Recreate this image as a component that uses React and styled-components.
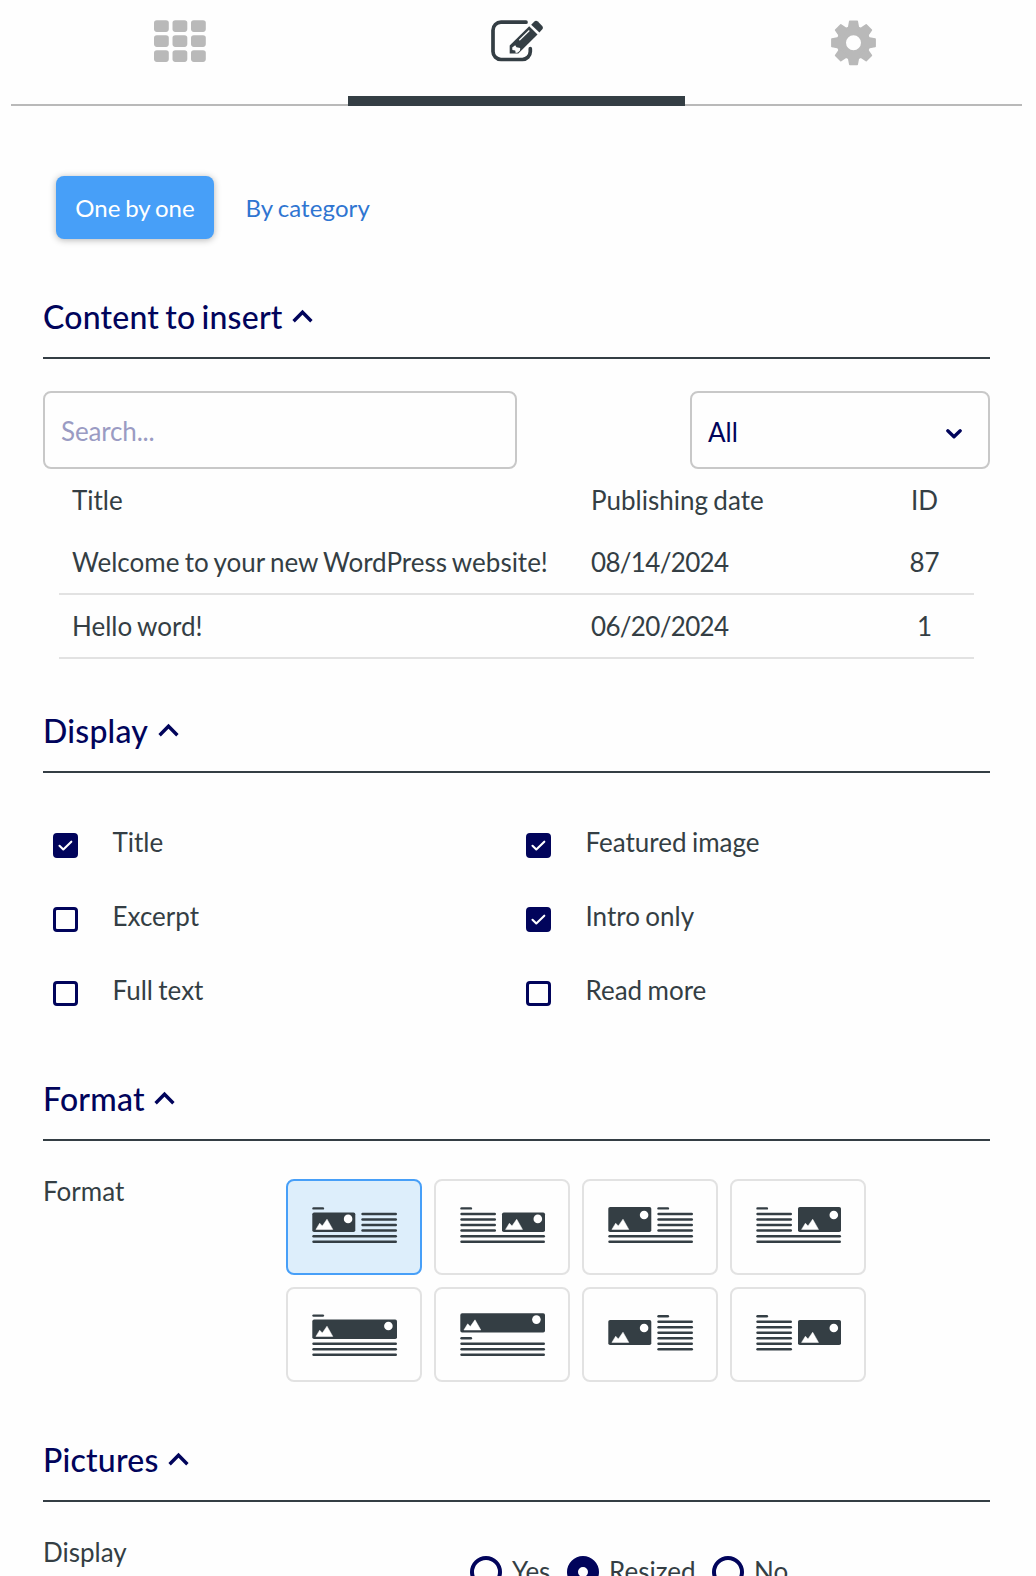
import React, { useState } from 'react'
import styled, { createGlobalStyle, css } from 'styled-components';

const GlobalStyle = createGlobalStyle`
  :root {
    --ink: #343e44; --navy: #01045b; --blue: #479ff8; --link: #2f75d1;
    --gray: #b9b9b9; --line: #e2e2e2; --field: #c8c8c8; --bg: #fefefe;
  }
  * { box-sizing: border-box; }
  html, body { margin: 0; height: 1576px; overflow: hidden; background: var(--bg); }
  body, button, input { font-family: Lato, "Liberation Sans", sans-serif; word-spacing: -1.3px; }
  body { font-size: 26px; line-height: 32px; color: var(--ink); }
  button { margin: 0; padding: 0; border: 0; background: none; cursor: pointer; }
`;
const Page = styled.div`
  height: 1576px; overflow: hidden;
`;
const TabBar = styled.nav`
  display: flex; height: 106px; padding: 0 14px 0 11px;
`;
const Tab = styled.button`
  flex: 1; display: flex; justify-content: center; align-items: flex-start;
  padding-top: 20px; border-bottom: 2px solid var(--gray); color: var(--gray);
  ${props =>
    props.$active &&
    css`
      border-bottom: 10px solid var(--ink);
      color: var(--ink);
    `}
`;
const Body = styled.main`
  padding: 70px 46px 0 43px;
`;
const Pills = styled.div`
  display: flex; gap: 12.5px; padding-left: 13px;
`;
const Pill = styled.button`
  height: 63px; padding: 0 19px; border-radius: 8px;
  font-size: 24px; line-height: 30px; white-space: nowrap; color: var(--link);
  ${props =>
    props.$active
      ? css`
          width: 158px;
          background: var(--blue);
          color: #fff;
          box-shadow: 0 1px 7px rgba(0,0,0,.3);
        `
      : css`
          letter-spacing: .1px;
        `}
`;
const Heading = styled.h2`
  display: flex; align-items: center; gap: 9.5px;
  margin: ${props => props.$top}px 0 0; padding-bottom: 20px; border-bottom: 2px solid var(--ink);
  font-size: 32px; font-weight: 500; line-height: 40px; color: var(--navy); cursor: pointer;
  letter-spacing: .22px; word-spacing: -2.2px;
  svg { margin-bottom: 2px; }
`;
const Filters = styled.div`
  display: flex; justify-content: space-between; margin-top: 32px;
`;
const SearchInput = styled.input`
  width: 474px; height: 78px; padding: 1px 16px 0; border: 2px solid var(--field); border-radius: 8px;
  background: transparent; color: var(--navy); font-size: 26px; letter-spacing: -.15px; outline: none;
  &::placeholder { color: #9a9bc3; opacity: 1; }
`;
const SelectBox = styled.button`
  display: flex; align-items: center; justify-content: space-between;
  width: 300px; height: 78px; padding: 3px 26px 0 16px; border: 2px solid var(--field); border-radius: 8px;
  font-size: 26px; color: var(--navy);
  svg { margin-top: 4px; }
`;
const Table = styled.div`
  margin: 0 16px;
`;
const Row = styled.div`
  display: grid; grid-template-columns: 519px 283px 100px;
  padding: 15px 0 15px 13px; border-bottom: 2px solid var(--line);
  > span:last-child { text-align: center; width: 101px; }
`;
const HeadRow = styled(Row)`
  border-bottom: 0;
`;
const DateText = styled.span`
  letter-spacing: -.68px;
`;
const Checks = styled.div`
  display: grid; grid-template-columns: 473px 1fr; row-gap: 42px; margin-top: 53px;
`;
const CheckItem = styled.label`
  display: flex; gap: 34.5px; padding-left: 10px; cursor: pointer;
`;
const CheckBox = styled.span`
  display: flex; align-items: center; justify-content: center;
  width: 25px; height: 25px; margin-top: 7px; border: 3px solid var(--navy); border-radius: 4px;
  background: ${props => props.$checked ? 'var(--navy)' : 'transparent'};
`;
const Field = styled.div`
  display: flex; padding-top: 34px;
`;
const FieldLabel = styled.div`
  width: ${props => props.$width}px;
`;
const Tiles = styled.div`
  display: grid; grid-template-columns: repeat(4, 136px); grid-template-rows: 96px 95px; gap: 12px;
  margin-top: 4px;
`;
const Tile = styled.button`
  border: 2px solid var(--line); border-radius: 8px; overflow: hidden;
  ${props =>
    props.$active &&
    css`
      border-color: var(--blue);
      background: #ddeefb;
    `}
  svg { display: block; }
`;
const Radios = styled.div`
  display: flex; margin-top: 20px;
`;
const RadioItem = styled.label`
  display: flex; align-items: flex-start; gap: 10px; width: ${props => props.$width}px; height: 33px; cursor: pointer;
  line-height: 30px;
`;
const RadioDot = styled.span`
  flex: none; width: 32px; height: 32px; border-radius: 50%;
  border: ${props => props.$checked ? 11 : 4}px solid var(--navy);
`;

const GridIcon = () => (
  <svg width="53" height="42" viewBox="0 0 53 42" fill="currentColor">
    {[0, 15, 30].map(y => [1, 19.5, 38].map(x => (
      <rect key={`${x}-${y}`} x={x} y={y + 0.3} width="14.8" height="11.6" rx="2.8" />
    )))}
  </svg>
)

const EditIcon = () => (
  <svg width="54" height="42" viewBox="-1 0 54 42" fill="currentColor">
    <path d="M35 2.2H10a8 8 0 0 0-8 8v21.3a8 8 0 0 0 8 8h21.3a8 8 0 0 0 8-8v-2.8" fill="none" stroke="currentColor" strokeWidth="3.7" strokeLinecap="round" />
    <path d="M18.7 33.6v-8.2L38.2 6.3l8.3 8.2-19.2 19.1z" />
    <path d="M40.2 4.8l2.9-3.1q1.8-1.8 3.8-.2l4.1 4.2q1.8 1.9.1 3.8l-2.7 3z" />
    <path d="M28.3 20.3L38.3 10.5" stroke="#fefefe" strokeWidth="1.3" />
    <path d="M21.2 27.4l3-2.2 1.3 2.1 3.7.8-.2 2.5-2.1 2-2.2.3-.5-2.5-2.8-.5z" fill="#fefefe" />
  </svg>
)

const GearIcon = () => (
  <svg width="45" height="46" viewBox="0 0 45 46" fill="currentColor">
    <circle cx="22.5" cy="22.8" r="12.2" fill="none" stroke="currentColor" strokeWidth="9.4" />
    {[0, 45, 90, 135, 180, 225, 270, 315].map(deg => (
      <path key={deg} transform={`rotate(${deg} 22.5 22.8)`} d="M18.8 1.2h7.4l1 5.4q.3 2 2 3.2h-13.4q1.7-1.2 2-3.2z" stroke="currentColor" strokeWidth="1.6" strokeLinejoin="round" />
    ))}
  </svg>
)

const AngleUp = () => (
  <svg width="21" height="14" viewBox="0 0 21 14" fill="none" stroke="currentColor" strokeWidth="3.4">
    <path d="M1.6 12.2L10.5 3.2l8.9 9" />
  </svg>
)

const AngleDown = () => (
  <svg width="16" height="10" viewBox="0 0 16 10" fill="none" stroke="currentColor" strokeWidth="3.3" strokeLinecap="round" strokeLinejoin="round">
    <path d="M1.8 1.8L8 7.8l6.2-6" />
  </svg>
)

const CheckMark = () => (
  <svg width="15" height="11" viewBox="0 0 15 11" fill="none" stroke="#fff" strokeWidth="2.1" strokeLinecap="round" strokeLinejoin="round">
    <path d="M1.5 5.8l3.8 3.7 8-7.8" />
  </svg>
)

// image block = [x, y, width, height], lines = [x1, x2, first y, count], dash = [x, y]
const formats = [
  { image: [26.3, 33.5, 43, 19.5], dash: [26.3, 29.4], lines: [[75.3, 111, 35, 4], [26.3, 111, 57.3, 2]] },
  { image: [68, 33.5, 43, 19.5], dash: [26.3, 29.4], lines: [[26.3, 62, 35, 4], [26.3, 111, 57.3, 2]] },
  { image: [26.3, 28, 43, 25], dash: [75.3, 29.4], lines: [[75.3, 111, 35, 4], [26.3, 111, 57.3, 2]] },
  { image: [68, 28, 43, 25], dash: [26.3, 29.4], lines: [[26.3, 62, 35, 4], [26.3, 111, 57.3, 2]] },
  { image: [26.3, 32.6, 84.7, 19.4], dash: [26.3, 28.6], lines: [[26.3, 111, 56.7, 3]] },
  { image: [26.3, 26.2, 84.7, 19.4], dash: [26.3, 51.3], lines: [[26.3, 111, 56.7, 3]] },
  { image: [26.3, 33, 43, 25], dash: [75.3, 29.3], lines: [[75.3, 111, 34.7, 6]] },
  { image: [68, 33, 43, 25], dash: [26.3, 29.3], lines: [[26.3, 62, 34.7, 6]] },
];

const FormatIcon = ({ image, dash, lines }) => {
  const [x, y, w, h] = image;
  const base = y + h - 2.6;
  const sunX = x + w - (w > 50 ? 8.6 : 7.2);
  const sunY = y + (h > 20 ? 8 : 6.4);
  return (
    <svg width="132" height="92" viewBox="2 2 132 92">
      <rect x={x} y={y} width={w} height={h} rx="1.8" fill="#343e44" />
      <circle cx={sunX} cy={sunY} r="4.3" fill="#fff" />
      <path d={`M${x + 3.6} ${base}l3.8-6.2 2.6 2.8 4.7-6.8 5.8 10.2z`} fill="#fff" stroke="#fff" strokeWidth=".5" strokeLinejoin="round" />
      <g stroke="#343e44" strokeWidth="2.4" strokeLinecap="round">
        <path d={`M${dash[0] + 1.2} ${dash[1]}h9.4`} />
        {lines.map(([x1, x2, top, count]) =>
          Array.from({ length: count }, (_, i) => (
            <path key={`${x1}-${top}-${i}`} d={`M${x1 + 1.2} ${top + i * 5.5}H${x2 - 1.2}`} />
          ))
        )}
      </g>
    </svg>
  )
}

const posts = [
  { id: 87, title: 'Welcome to your new WordPress website!', date: '08/14/2024' },
  { id: 1, title: 'Hello word!', date: '06/20/2024' },
];
const tabs = [GridIcon, EditIcon, GearIcon];
const options = ['Title', 'Featured image', 'Excerpt', 'Intro only', 'Full text', 'Read more'];
const radios = [['Yes', 97], ['Resized', 145], ['No', 90]];

const SectionTitle = ({ top, children }) => (
  <Heading $top={top}>{children}<AngleUp /></Heading>
)

const App = () => {
  const [ tab, setTab ] = useState(1)
  const [ mode, setMode ] = useState('One by one')
  const [ search, setSearch ] = useState('')
  const [ checked, setChecked ] = useState(['Title', 'Featured image', 'Intro only'])
  const [ format, setFormat ] = useState(0)
  const [ picture, setPicture ] = useState('Resized')

  const onCheck = (name) => {
    setChecked(checked.includes(name) ? checked.filter(c => c !== name) : [...checked, name])
  }

  return (
    <Page>
      <GlobalStyle />
      <TabBar>
        {tabs.map((Icon, i) => (
          <Tab key={i} $active={tab === i} onClick={() => setTab(i)}><Icon /></Tab>
        ))}
      </TabBar>
      <Body>
        <Pills>
          {['One by one', 'By category'].map(name => (
            <Pill key={name} $active={mode === name} onClick={() => setMode(name)}>{name}</Pill>
          ))}
        </Pills>

        <SectionTitle top={58}>Content to insert</SectionTitle>
        <Filters>
          <SearchInput placeholder='Search...' value={search} onChange={e => setSearch(e.target.value)} />
          <SelectBox>All<AngleDown /></SelectBox>
        </Filters>
        <Table>
          <HeadRow><span>Title</span><span>Publishing date</span><span>ID</span></HeadRow>
          {posts.map(post => (
            <Row key={post.id}><span>{post.title}</span><DateText>{post.date}</DateText><span>{post.id}</span></Row>
          ))}
        </Table>

        <SectionTitle top={52}>Display</SectionTitle>
        <Checks>
          {options.map(name => (
            <CheckItem key={name} onClick={() => onCheck(name)}>
              <CheckBox $checked={checked.includes(name)}>
                {checked.includes(name) && <CheckMark />}
              </CheckBox>
              {name}
            </CheckItem>
          ))}
        </Checks>

        <SectionTitle top={73}>Format</SectionTitle>
        <Field>
          <FieldLabel $width={243}>Format</FieldLabel>
          <Tiles>
            {formats.map((item, i) => (
              <Tile key={i} $active={format === i} onClick={() => setFormat(i)}>
                <FormatIcon {...item} />
              </Tile>
            ))}
          </Tiles>
        </Field>

        <SectionTitle top={58}>Pictures</SectionTitle>
        <Field>
          <FieldLabel $width={427}>Display</FieldLabel>
          <Radios>
            {radios.map(([name, width]) => (
              <RadioItem key={name} $width={width} onClick={() => setPicture(name)}>
                <RadioDot $checked={picture === name} />{name}
              </RadioItem>
            ))}
          </Radios>
        </Field>
      </Body>
    </Page>
  )
}

export default App
